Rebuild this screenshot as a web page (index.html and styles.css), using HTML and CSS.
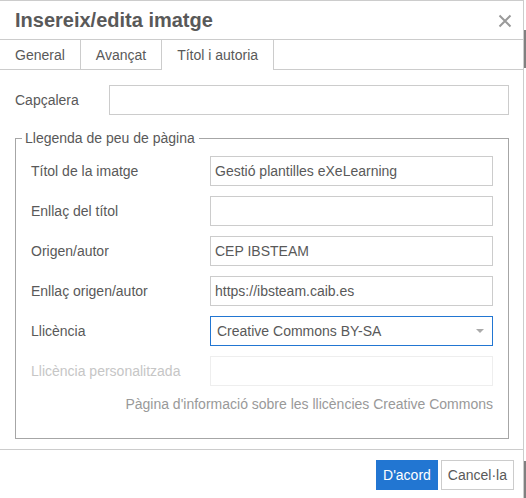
FILE: index.html
```html
<!DOCTYPE html>
<html lang="ca">
  <head>
    <meta charset="UTF-8" />
    <meta name="viewport" content="width=device-width, initial-scale=1.0" />
    <title>Insereix/edita imatge</title>
    <link rel="stylesheet" href="styles.css">
  </head>
  <body>
    <div class="dialog">
      <div class="dialog_head">
        <span class="dialog_title">Insereix/edita imatge</span>
        <span class="close_btn">
          <svg width="14" height="14" viewBox="0 0 14 14">
            <path d="M1.5 1.5 L12.5 12.5 M12.5 1.5 L1.5 12.5" stroke="#9a9a9a" stroke-width="2" fill="none" />
          </svg>
        </span>
      </div>
      <div class="tabs">
        <span class="tab">General</span>
        <span class="tab">Avançat</span>
        <span class="tab active">Títol i autoria</span>
      </div>
      <div class="dialog_body">
        <div class="row top_row">
          <label class="label top_label">Capçalera</label>
          <input class="field" type="text" value="">
        </div>
        <fieldset class="group">
          <legend>Llegenda de peu de pàgina</legend>
          <div class="row">
            <label class="label">Títol de la imatge</label>
            <input class="field" type="text" value="Gestió plantilles eXeLearning">
          </div>
          <div class="row">
            <label class="label">Enllaç del títol</label>
            <input class="field" type="text" value="">
          </div>
          <div class="row">
            <label class="label">Origen/autor</label>
            <input class="field" type="text" value="CEP IBSTEAM">
          </div>
          <div class="row">
            <label class="label">Enllaç origen/autor</label>
            <input class="field" type="text" value="https://ibsteam.caib.es">
          </div>
          <div class="row">
            <label class="label">Llicència</label>
            <div class="field select">
              <span>Creative Commons BY-SA</span>
              <span class="arrow"></span>
            </div>
          </div>
          <div class="row">
            <label class="label disabled">Llicència personalitzada</label>
            <input class="field" type="text" value="" disabled>
          </div>
          <div class="info_link">Pàgina d'informació sobre les llicències Creative Commons</div>
        </fieldset>
      </div>
      <div class="dialog_foot">
        <button class="btn primary">D'acord</button>
        <button class="btn">Cancel·la</button>
      </div>
    </div>
  </body>
</html>
```

FILE: styles.css
```css
html, body {
  margin: 0;
  padding: 0;
}

body {
  width: 526px;
  height: 498px;
  overflow: hidden;
  font-family: "Liberation Sans", Arial, sans-serif;
  font-size: 14px;
  color: #595959;
  background: linear-gradient(#fff 30px, #808080 30px, #808080 68px, #fff 68px, #fff 461px, #808080 461px) right top / 2px 100% no-repeat;
}

.dialog {
  width: 524px;
  height: 520px;
  box-sizing: border-box;
  border-top: 1px solid #cccccc;
  border-right: 1px solid #cccccc;
  background-color: #ffffff;
}

.dialog_head {
  display: flex;
  align-items: center;
  justify-content: space-between;
  height: 38px;
  padding: 0 11px 0 15px;
  border-bottom: 1px solid #cccccc;
}

.dialog_title {
  font-size: 20px;
  font-weight: bold;
  color: #595959;
}

.close_btn {
  display: flex;
  margin-top: 2px;
}

.tabs {
  display: flex;
  height: 29px;
  border-bottom: 1px solid #cccccc;
}

.tab {
  display: flex;
  align-items: center;
  padding: 0 15px;
  border-right: 1px solid #cccccc;
  color: #595959;
}

.tab.active {
  height: 30px;
  background-color: #ffffff;
}

.dialog_body {
  padding: 15px 14px 10px 15px;
}

.row {
  display: flex;
  align-items: center;
  margin-bottom: 10px;
}

.top_row {
  margin-bottom: 0;
}

.label {
  width: 179px;
  flex-shrink: 0;
}

.top_label {
  width: 94px;
}

.label.disabled {
  color: #c6c6c6;
}

.field {
  flex: 1;
  min-width: 0;
  height: 30px;
  box-sizing: border-box;
  margin: 0;
  padding: 0 4px;
  border: 1px solid #cccccc;
  border-radius: 0;
  font-family: inherit;
  font-size: 14px;
  color: #595959;
  background-color: #ffffff;
  outline: none;
}

.field:disabled {
  border-color: #eeeeee;
  background-color: #ffffff;
}

.select {
  display: flex;
  align-items: center;
  justify-content: space-between;
  padding: 0 8px 0 6px;
  border-color: #2276d2;
}

.arrow {
  width: 0;
  height: 0;
  border-left: 4px solid transparent;
  border-right: 4px solid transparent;
  border-top: 4px solid #aaaaaa;
}

.group {
  margin: 15px 0 0;
  padding: 10px 15px 26px;
  border: 1px solid #a6a6a6;
}

.group legend {
  margin-left: -9px;
  padding: 0 4px 0 3px;
  line-height: 16px;
  color: #595959;
}

.info_link {
  text-align: right;
  line-height: 16px;
  color: #999999;
}

.dialog_foot {
  display: flex;
  justify-content: flex-end;
  gap: 3px;
  padding: 10px 9px 0;
  border-top: 1px solid #cccccc;
}

.btn {
  height: 30px;
  padding: 0 6px;
  border: 1px solid #cccccc;
  border-radius: 0;
  font-family: inherit;
  font-size: 14px;
  color: #595959;
  background-color: #ffffff;
}

.btn.primary {
  border-color: #2276d2;
  color: #ffffff;
  background-color: #2276d2;
}
```
